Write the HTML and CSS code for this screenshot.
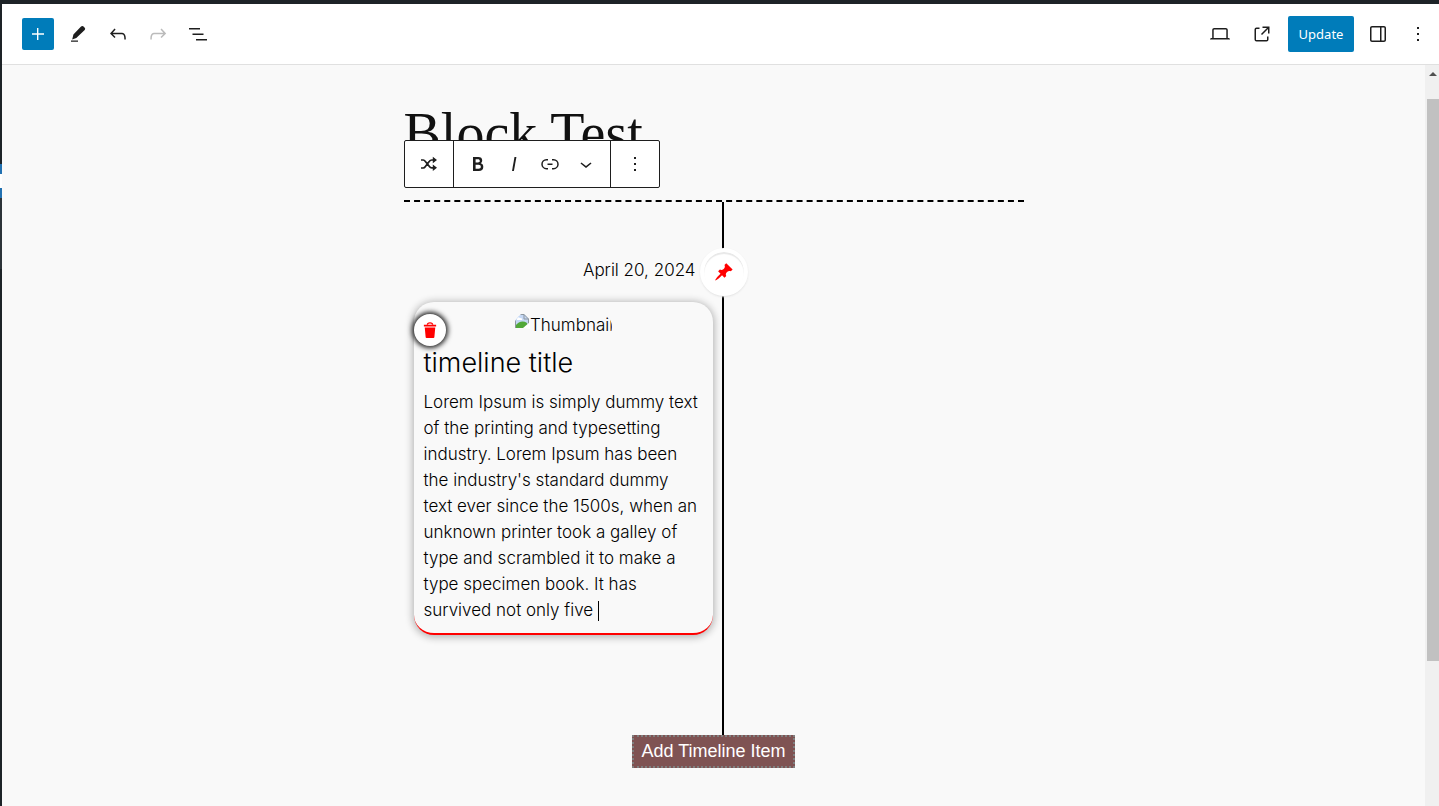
FILE: index.html
```html
<!DOCTYPE html>
<html lang="en">
<head>
<meta charset="utf-8">
<title>Block Test</title>
<link rel="stylesheet" href="styles.css">
</head>
<body>
<div class="app">
  <div class="adminbar"></div>
  <div class="shell">
    <aside class="menu-edge"><span class="menu-current"></span><span class="menu-sub"></span></aside>
    <div class="editor">
      <header class="header">
        <div class="tools">
          <button class="tool inserter" aria-label="Add block"><svg viewBox="0 0 24 24"><path d="M11 11.2V6h1.4v5.2H18v1.5h-5.6V18H11v-5.3H6v-1.5z"/></svg></button>
          <button class="tool" aria-label="Tools"><svg viewBox="0 0 24 24"><path d="M14.800 4.800q1.500-1.500 3 0l.9.9q1 1 0 2.200L10.300 16 6.200 17.400 7.400 12.600zM5 18.400h7v1.400H5z"/></svg></button>
          <button class="tool" aria-label="Undo"><svg viewBox="0 0 24 24"><path d="M18.3 11.7c-.6-.6-1.4-.9-2.3-.9H6.7l2.9-3.3-1.1-1-4.5 5L8.5 16l1-1-2.7-2.7H16c.5 0 .9.2 1.3.5 1 1 1 3.4 1 4.5v.3h1.5v-.2c0-1.5 0-4.3-1.5-5.7z"/></svg></button>
          <button class="tool" aria-label="Redo" disabled><svg viewBox="0 0 24 24"><path d="M15.6 6.5l-1.1 1 2.9 3.3H8c-.9 0-1.7.3-2.3.9-1.4 1.5-1.4 4.2-1.4 5.6v.2h1.5v-.3c0-1.1 0-3.5 1-4.5.3-.3.7-.5 1.3-.5h9.2L14.5 15l1.1 1.1 4.6-4.6-4.6-5z"/></svg></button>
          <button class="tool" aria-label="Document overview"><svg viewBox="0 0 24 24"><path d="M3 6h11v1.500H3V6zm3.500 5.500h11V13h-11v-1.500zM21 17H10v1.500h11V17z"/></svg></button>
        </div>
        <div class="settings">
          <div class="previews">
            <button class="tool" aria-label="Preview device"><svg viewBox="0 0 24 24"><path d="M20.500 16h-.7V8c0-1.100-.9-2-2-2H6.200c-1.100 0-2 .9-2 2v8h-.7c-.8 0-1.500.7-1.500 1.500h20c0-.8-.7-1.500-1.500-1.500zM5.700 8c0-.3.2-.5.5-.5h11.600c.3 0 .5.2.5.5v8H5.700V8z"/></svg></button>
            <a class="tool" href="#" aria-label="View post"><svg viewBox="0 0 24 24"><path d="M19.500 4.500h-7V6h4.440l-5.970 5.970 1.060 1.060L18 7.060v4.440h1.500v-7Zm-13 1a2 2 0 0 0-2 2v10a2 2 0 0 0 2 2h10a2 2 0 0 0 2-2v-3H17v3a.5.5 0 0 1-.5.5h-10a.5.5 0 0 1-.5-.5v-10a.5.5 0 0 1 .5-.5h3V5.500h-3Z"/></svg></a>
            <button class="update">Update</button>
          </div>
          <button class="tool" aria-label="Settings"><svg viewBox="0 0 24 24"><path d="M18 4H6c-1.100 0-2 .9-2 2v12c0 1.100.9 2 2 2h12c1.100 0 2-.9 2-2V6c0-1.100-.9-2-2-2zm-4 14.500H6c-.3 0-.5-.2-.5-.5V6c0-.3.2-.5.5-.5h8v13zm4.500-.5c0 .3-.2.5-.5.5h-2.500v-13H18c.3 0 .5.2.5.5v12z"/></svg></button>
          <button class="tool" aria-label="Options"><svg viewBox="0 0 24 24"><path d="M13 19h-2v-2h2v2zm0-6h-2v-2h2v2zm0-6h-2V5h2v2z"/></svg></button>
        </div>
      </header>
      <div class="viewport">
        <main class="canvas">
          <div class="content">
            <h1 class="title">Block Test</h1>
            <div class="toolbar" role="toolbar" aria-label="Block tools">
              <div class="group"><button class="bt" aria-label="Transform"><svg viewBox="0 0 24 24"><path class="line" d="M4 8h2.200q1.200 0 2 1.200l4.200 5.300q.9 1.300 2.400 1.300h2M4 16h2.200q1.200 0 2-1.200l4.200-5.500Q13.300 8 14.800 8h2"/><path d="M15.800 4.800 20 8l-4.200 3.200zM15.800 12.600l4.200 3.200-4.200 3.200z"/></svg></button></div>
              <div class="group">
                <button class="bt" aria-label="Bold"><svg viewBox="0 0 24 24"><path d="M14.700 11.300c1-.6 1.500-1.600 1.500-3 0-2.300-1.300-3.400-4-3.400H7v14h5.800c1.400 0 2.500-.3 3.300-1 .8-.7 1.200-1.700 1.200-2.900.1-1.900-.8-3.100-2.600-3.700zm-5.100-4h2.300c.6 0 1.100.1 1.400.4.3.3.5.7.5 1.200s-.2 1-.5 1.200c-.3.3-.8.4-1.400.4H9.600V7.300zm4.600 9c-.4.3-1 .4-1.700.4H9.600v-3.900h2.900c.7 0 1.300.2 1.700.5.4.3.6.8.6 1.500s-.2 1.200-.6 1.500z"/></svg></button>
                <button class="bt" aria-label="Italic"><svg viewBox="0 0 24 24"><path d="M12.500 5 10 19h1.900l2.500-14z"/></svg></button>
                <button class="bt" aria-label="Link"><svg viewBox="0 0 24 24"><path d="M10 17.389H8.444A5.194 5.194 0 1 1 8.444 7H10v1.500H8.444a3.694 3.694 0 0 0 0 7.389H10v1.500ZM14 7h1.556a5.194 5.194 0 0 1 0 10.390H14v-1.500h1.556a3.694 3.694 0 0 0 0-7.390H14V7Zm-4.500 6h5v-1.500h-5V13Z"/></svg></button>
                <button class="bt" aria-label="More"><svg viewBox="0 0 24 24"><path d="M17.500 11.600 12 16l-5.500-4.400.9-1.200L12 14l4.500-3.600 1 1.200z"/></svg></button>
              </div>
              <div class="group"><button class="bt" aria-label="Options"><svg viewBox="0 0 24 24"><path d="M13 19h-2v-2h2v2zm0-6h-2v-2h2v2zm0-6h-2V5h2v2z"/></svg></button></div>
            </div>
            <section class="timeline">
              <div class="entry">
                <time class="date" datetime="2024-04-20">April 20, 2024</time>
                <article class="card">
                  <button class="delete" aria-label="Delete item"><svg viewBox="0 0 16 20"><path d="M1 4h14v2H1zM2 7h12l-1 11c0 .6-.4 1-1 1H4c-.6 0-1-.4-1-1z"/><path class="handle" d="M5 4c0-3 6-3 6 0"/></svg></button>
                  <div class="thumb" role="img" aria-label="Thumbnail"><svg viewBox="0 0 16 16"><path fill="#c5d8f5" d="M1 1h9l5 5v9H1z"/><path fill="#fff" d="M3 6q1-3 3-1 3 0 2 2H3z"/><path fill="#52a839" d="M1 15v-2q6-7 12-3l2 5z"/><path fill="none" stroke="#8d969e" d="M1.500 15V1.500H10l4.500 4.500v9M10 1.500V6h4.500"/><path fill="#fff" d="m9 15 7-6v7z"/></svg><span>Thumbnail</span></div>
                  <h2 class="card-title">timeline title</h2>
                  <p class="card-text">Lorem Ipsum is simply dummy text of the printing and typesetting industry. Lorem Ipsum has been the industry's standard dummy text ever since the 1500s, when an unknown printer took a galley of type and scrambled it to make a type specimen book. It has survived not only five <span class="caret"></span></p>
                </article>
              </div>
              <div class="axis"><span class="pin"><svg viewBox="0 0 20 20"><path d="M10.440 3.020l1.820-1.820 6.360 6.350-1.830 1.820c-1.050-.68-2.480-.57-3.410.36l-.75.75c-.92.93-1.040 2.350-.35 3.410l-1.830 1.820-2.410-2.410-2.800 2.790c-.42.42-3.380 2.710-3.800 2.290s1.860-3.390 2.280-3.810l2.790-2.790L4.100 9.360l1.830-1.820c1.050.69 2.480.57 3.400-.36l.75-.75c.93-.92 1.050-2.350.36-3.410z"/></svg></span></div>
            </section>
            <button class="add">Add Timeline Item</button>
          </div>
        </main>
        <div class="scrollbar"><span class="arrow"></span><span class="thumb-bar"></span></div>
      </div>
    </div>
  </div>
</div>
</body>
</html>
```
FILE: styles.css
```css
* { box-sizing: border-box; }
body { margin: 0; font-family: Inter, "Liberation Sans", sans-serif; color: #000; }
button { margin: 0; padding: 0; border: 0; background: none; color: inherit; font: inherit; }
svg { display: block; fill: currentColor; }

.app { display: flex; flex-direction: column; height: 100vh; overflow: hidden; }
.adminbar { flex: none; height: 4px; background: #1d2327; }
.shell { display: flex; flex: 1; min-height: 0; }
.menu-edge { display: flex; flex-direction: column; width: 2px; padding-top: 160px; background: #1d2327; }
.menu-current { height: 34px; border: solid #2271b1; border-width: 10px 0; background: #fff; }
.menu-sub { height: 71px; background: #2c3338; }
.editor { display: flex; flex: 1; flex-direction: column; min-width: 0; }

.header { display: flex; flex: none; align-items: center; justify-content: space-between; height: 61px; padding: 0 5px 0 20px; border-bottom: 1px solid #e0e0e0; background: #fff; color: #1e1e1e; }
.tools { display: flex; gap: 8px; }
.settings { display: flex; align-items: center; gap: 8px; }
.previews { display: flex; align-items: center; gap: 10px; }
.tool { display: flex; align-items: center; justify-content: center; width: 32px; height: 32px; color: inherit; }
.tool svg, .bt svg { width: 24px; height: 24px; }
.tool:disabled { color: #bbb; }
.inserter { border-radius: 2px; background: #007cba; color: #fff; }
.update { min-width: 66px; height: 36px; padding: 0 10px; border-radius: 2px; background: #007cba; color: #fff; font: 13px/36px "Noto Sans", sans-serif; }

.viewport { display: flex; flex: 1; min-height: 0; background: #f9f9f9; }
.canvas { flex: 1; min-width: 0; overflow: hidden; padding: 36px 20px 0; }
.content { display: flex; flex-direction: column; max-width: 620px; margin: 0 auto; }
.title { margin: 0; height: 39px; color: #111; font: 400 56px/64px "Liberation Serif", serif; white-space: nowrap; }

.toolbar { position: relative; display: flex; align-self: flex-start; height: 48px; border: 1px solid #1e1e1e; border-radius: 2px; background: #fff; color: #1e1e1e; }
.group { display: flex; align-items: center; padding: 0 6px; }
.group + .group { border-left: 1px solid #1e1e1e; }
.bt { display: flex; align-items: center; justify-content: center; width: 36px; height: 46px; }
.line { fill: none; stroke: currentColor; stroke-width: 1.7; }

.timeline { display: grid; grid-template-columns: 318px 2px 1fr; min-height: 535px; margin-top: 12px; border-top: 2px dashed #000; }
.entry { display: flex; flex-direction: column; padding: 55px 9px 0 10px; }
.date { margin-right: 17px; font-size: 17px; font-weight: 300; line-height: 26px; text-align: right; }
.axis { position: relative; background: #000; }
.pin { position: absolute; top: 46px; left: -22px; display: flex; align-items: center; justify-content: center; width: 48px; height: 48px; border: 4px solid #fff; border-radius: 50%; background: #fff; box-shadow: 0 1px 2px #e4e4e4, inset 0 2px 1px #e8e8e8; color: #f00; }
.pin svg { width: 20px; height: 20px; }

.card { position: relative; margin-top: 19px; padding: 10px; border-bottom: 2px solid #f00; border-radius: 20px; background: #f9f9f9; box-shadow: 0 1px 7px 2px #bbb; font-weight: 300; }
.delete { position: absolute; top: 12px; left: 0; display: flex; align-items: center; justify-content: center; width: 32px; height: 32px; border-radius: 50%; background: #fff; box-shadow: 0 0 5px 2px #222; color: #f00; }
.delete svg { width: 14px; height: 18px; }
.handle { fill: none; stroke: currentColor; stroke-width: 1.5; }
.thumb { display: flex; align-items: flex-start; width: 98px; height: 30px; margin: 0 auto; padding-top: 1px; overflow: hidden; border-radius: 15px; font-size: 17px; line-height: 24px; }
.thumb svg { flex: none; width: 16px; height: 16px; }
.card-title { margin: 4px 0 0; font-size: 27px; font-weight: 300; line-height: 34px; }
.card-text { margin: 9px 0 0; padding-right: 2px; font-size: 17px; line-height: 26px; }
.caret { display: inline-block; width: 1px; height: 20px; background: #000; vertical-align: middle; }

.add { align-self: center; height: 33px; padding: 0 7px; border: 2px dotted #808080; background: #7f5353; color: #fff; font: 18px/29px "Liberation Sans", sans-serif; }

.scrollbar { display: flex; flex: none; flex-direction: column; width: 14px; padding: 7px 0 0 2px; background: #f0f0f0; }
.arrow { align-self: center; border: solid transparent; border-width: 0 4px 4px; border-bottom-color: #505050; }
.thumb-bar { height: 562px; margin-top: 23px; background: #c1c1c1; }
```
